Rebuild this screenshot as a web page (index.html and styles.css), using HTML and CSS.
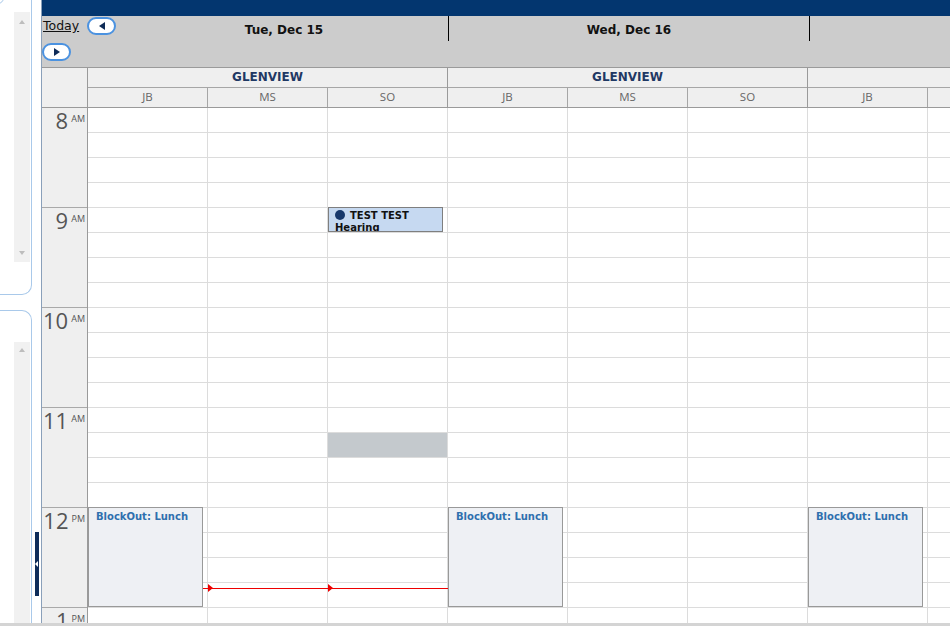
FILE: index.html
```html
<!DOCTYPE html>
<html lang="en">
<head>
<meta charset="utf-8">
<title>Schedule</title>
<link rel="stylesheet" href="styles.css">
</head>
<body>
<div class="page">
  <aside class="side">
    <span class="corner-cap"></span>
    <div class="panel panel-top">
      <div class="track track-top">
        <span class="arr arr-up"></span>
        <span class="arr arr-down"></span>
      </div>
    </div>
    <div class="panel panel-bottom">
      <div class="track track-bottom">
        <span class="arr arr-up"></span>
      </div>
    </div>
    <span class="collapse-tab"><i></i></span>
  </aside>

  <main class="cal">
    <div class="topbar"></div>

    <div class="toolbar">
      <div class="nav">
        <a class="today">Today</a>
        <span class="btn prev"><i class="tri tri-left"></i></span>
        <span class="btn next"><i class="tri tri-right"></i></span>
      </div>
      <div class="day day-first">Tue, Dec 15</div>
      <div class="day day-mid">Wed, Dec 16</div>
      <div class="day day-last"></div>
    </div>

    <div class="heads">
      <div class="corner"></div>
      <div class="group">
        <div class="gname">GLENVIEW</div>
        <div class="res"><span>JB</span><span>MS</span><span>SO</span></div>
      </div>
      <div class="group">
        <div class="gname">GLENVIEW</div>
        <div class="res"><span>JB</span><span>MS</span><span>SO</span></div>
      </div>
      <div class="group">
        <div class="gname"></div>
        <div class="res"><span>JB</span><span></span><span></span></div>
      </div>
    </div>

    <div class="grid">
      <div class="gutter">
        <div class="hour"><div class="lbl"><span class="hn">8</span><span class="ap">AM</span></div></div>
        <div class="hour"><div class="lbl"><span class="hn">9</span><span class="ap">AM</span></div></div>
        <div class="hour"><div class="lbl"><span class="hn">10</span><span class="ap">AM</span></div></div>
        <div class="hour"><div class="lbl"><span class="hn">11</span><span class="ap">AM</span></div></div>
        <div class="hour"><div class="lbl"><span class="hn">12</span><span class="ap">PM</span></div></div>
        <div class="hour"><div class="lbl"><span class="hn">1</span><span class="ap">PM</span></div></div>
      </div>

      <!-- Tue, Dec 15 -->
      <div class="col">
        <div class="now"></div>
        <div class="block">BlockOut: Lunch</div>
      </div>
      <div class="col">
        <div class="now"></div>
      </div>
      <div class="col">
        <div class="appt"><span class="dot"></span>TEST TEST<br>Hearing</div>
        <div class="sel"></div>
        <div class="now"></div>
      </div>

      <!-- Wed, Dec 16 -->
      <div class="col">
        <div class="block">BlockOut: Lunch</div>
      </div>
      <div class="col"></div>
      <div class="col"></div>

      <!-- Thu -->
      <div class="col">
        <div class="block">BlockOut: Lunch</div>
      </div>
      <div class="col"></div>
    </div>
  </main>
</div>
<div class="hbar"></div>
</body>
</html>
```

FILE: styles.css
```css
* {
  box-sizing: border-box;
  margin: 0;
  padding: 0;
}

html,
body {
  width: 950px;
  height: 626px;
  overflow: hidden;
  background: #fff;
}

body {
  font-family: "DejaVu Sans", sans-serif;
  color: #111;
}

.page {
  display: flex;
  height: 623px;
}

/* ---------- left side panels ---------- */
.side {
  position: relative;
  width: 41px;
  flex: none;
  display: flex;
  flex-direction: column;
}

.corner-cap {
  position: absolute;
  left: -8px;
  top: -8px;
  width: 12px;
  height: 12px;
  border: 1px solid #a9c9ea;
  border-radius: 0 0 6px 0;
}

.panel {
  width: 32px;
  border-right: 1px solid #a9c9ea;
}

.panel-top {
  height: 295px;
  flex: none;
  padding-top: 12px;
  border-bottom: 1px solid #a9c9ea;
  border-bottom-right-radius: 10px;
}

.panel-bottom {
  flex: 1;
  margin-top: 15px;
  padding-top: 31px;
  border-top: 1px solid #a9c9ea;
  border-top-right-radius: 10px;
  display: flex;
  flex-direction: column;
}

.track {
  margin-left: 14px;
  width: 16px;
  background: #f1f1f1;
  display: flex;
  flex-direction: column;
  align-items: center;
}

.track-top {
  height: 250px;
  justify-content: space-between;
  padding: 8px 0 7px;
}

.track-bottom {
  flex: 1;
  padding-top: 6px;
}

.arr {
  width: 0;
  height: 0;
  border-left: 3.5px solid transparent;
  border-right: 3.5px solid transparent;
}

.arr-up {
  border-bottom: 4px solid #bdbdbd;
}

.arr-down {
  border-top: 4px solid #bdbdbd;
}

.collapse-tab {
  position: absolute;
  left: 35px;
  top: 532px;
  width: 4px;
  height: 64px;
  background: #0e2c59;
}

.collapse-tab i {
  position: absolute;
  left: 0;
  top: 29px;
  width: 0;
  height: 0;
  border-top: 3px solid transparent;
  border-bottom: 3px solid transparent;
  border-right: 3px solid #fff;
}

/* ---------- calendar ---------- */
.cal {
  flex: 1;
  min-width: 0;
  display: flex;
  flex-direction: column;
  overflow: hidden;
  border-left: 1px solid #8aa0ba;
}

.topbar {
  height: 16px;
  flex: none;
  background: #03366f;
}

.toolbar {
  height: 52px;
  flex: none;
  display: flex;
  align-items: flex-start;
  background: #cccccc;
  border-bottom: 1px solid #9a9a9a;
}

.nav {
  width: 78px;
  flex: none;
  display: grid;
  grid-template-columns: auto auto;
  justify-content: start;
  align-items: start;
  row-gap: 8px;
  padding-top: 1px;
}

.today {
  margin: 1px 0 0 1px;
  font-size: 12.5px;
  line-height: 15px;
  color: #111;
  text-decoration: underline;
  cursor: pointer;
}

.btn {
  width: 29px;
  height: 18px;
  border: 2px solid #4b92e0;
  border-radius: 9px;
  background: #fff;
  display: flex;
  align-items: center;
  justify-content: center;
}

.prev {
  margin-left: 8px;
}

.next {
  grid-column: 1;
}

.tri {
  width: 0;
  height: 0;
  border-top: 4.5px solid transparent;
  border-bottom: 4.5px solid transparent;
}

.tri-left {
  border-right: 6px solid #0f2b57;
}

.tri-right {
  border-left: 6px solid #0f2b57;
}

.day {
  flex: none;
  height: 25px;
  padding-top: 2px;
  display: flex;
  align-items: center;
  justify-content: center;
  font-size: 12px;
  font-weight: bold;
  color: #111;
  border-right: 1px solid #000;
}

.day-first {
  width: 329px;
}

.day-mid {
  width: 361px;
}

.day-last {
  width: 361px;
}

/* resource header rows */
.heads {
  height: 40px;
  flex: none;
  display: flex;
  background: #efefef;
  border-bottom: 1px solid #9a9a9a;
}

.corner {
  width: 46px;
  flex: none;
  border-right: 1px solid #9a9a9a;
}

.group {
  width: 360px;
  flex: none;
  border-right: 1px solid #9a9a9a;
}

.gname {
  height: 20px;
  padding-bottom: 2px;
  border-bottom: 1px solid #a6a6a6;
  display: flex;
  align-items: center;
  justify-content: center;
  font-size: 12px;
  font-weight: bold;
  color: #1f3864;
}

.res {
  height: 19px;
  display: flex;
}

.res span {
  width: 120px;
  flex: none;
  padding-bottom: 2px;
  display: flex;
  align-items: center;
  justify-content: center;
  font-family: "Open Sans", sans-serif;
  font-size: 11.5px;
  color: #666;
  border-right: 1px solid #a6a6a6;
}

.res span:last-child {
  width: 119px;
  border-right: none;
}

/* time grid; the calendar box clips what runs past its edges */
.grid {
  flex: 1;
  min-height: 0;
  display: flex;
}

.gutter {
  width: 46px;
  flex: none;
  background: #efefef;
  border-right: 1px solid #9a9a9a;
}

.hour {
  height: 100px;
  border-bottom: 1px solid #a9a9a9;
}

.lbl {
  display: flex;
  justify-content: flex-end;
  align-items: flex-start;
  padding-right: 2px;
  font-family: "Open Sans", sans-serif;
  color: #555;
}

.hn {
  font-size: 22px;
  line-height: 24px;
}

.ap {
  margin: 5px 0 0 3px;
  font-size: 9px;
  line-height: 11px;
}

.col {
  position: relative;
  width: 120px;
  flex: none;
  border-right: 1px solid #dcdcdc;
  background: repeating-linear-gradient(to bottom, #fff 0 24px, #dcdcdc 24px 25px);
}

.appt {
  position: absolute;
  top: 99px;
  left: 0;
  width: 115px;
  height: 25px;
  padding: 2px 0 0 6px;
  overflow: hidden;
  background: #c6d9f1;
  border: 1px solid #7f7f7f;
  font-size: 10px;
  font-weight: bold;
  line-height: 12px;
  color: #111;
  z-index: 2;
}

.dot {
  display: inline-block;
  vertical-align: top;
  width: 10px;
  height: 10px;
  margin-right: 5px;
  border-radius: 50%;
  background: #17386b;
}

.sel {
  position: absolute;
  top: 325px;
  left: 0;
  width: 119px;
  height: 24px;
  background: #c4c9cd;
}

.block {
  position: absolute;
  top: 399px;
  left: 0;
  width: 115px;
  height: 100px;
  padding: 2px 0 0 7px;
  background: #eef0f4;
  border: 1px solid #999;
  font-size: 10px;
  font-weight: bold;
  line-height: 13px;
  color: #2f6fae;
  z-index: 2;
}

.now {
  position: absolute;
  top: 480px;
  left: 0;
  right: -1px;
  height: 1px;
  background: #ee0000;
  z-index: 1;
}

.now::before {
  content: "";
  position: absolute;
  left: 0;
  top: -4px;
  width: 0;
  height: 0;
  border-top: 4.5px solid transparent;
  border-bottom: 4.5px solid transparent;
  border-left: 5px solid #ee0000;
}

.hbar {
  height: 3px;
  background: #d4d4d4;
}
```
